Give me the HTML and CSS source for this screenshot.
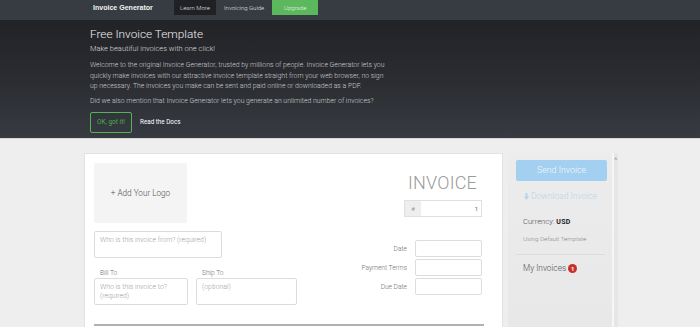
FILE: index.html
```html
<!DOCTYPE html>
<html lang="en">
<head>
    <meta charset="UTF-8">
    <meta name="viewport" content="width=device-width, initial-scale=1.0">
    <title>Invoice Generator</title>
    <link rel="stylesheet" href="styles.css">
</head>
<body>
    <nav class="topbar">
        <div class="container topbar-inner">
            <span class="brand">Invoice Generator</span>
            <a class="nav-link nav-dark" href="#">Learn More</a>
            <a class="nav-link" href="#">Invoicing Guide</a>
            <a class="nav-link nav-green" href="#">Upgrade</a>
        </div>
    </nav>

    <header class="hero">
        <div class="container hero-inner">
            <h1>Free Invoice Template</h1>
            <p class="lead">Make beautiful invoices with one click!</p>
            <p class="text">Welcome to the original Invoice Generator, trusted by millions of people. Invoice Generator lets you quickly make invoices with our attractive invoice template straight from your web browser, no sign up necessary. The invoices you make can be sent and paid online or downloaded as a PDF.</p>
            <p class="text">Did we also mention that Invoice Generator lets you generate an unlimited number of invoices?</p>
            <div class="hero-actions">
                <a class="btn-ok" href="#">OK, got it!</a>
                <a class="docs-link" href="#">Read the Docs</a>
            </div>
        </div>
    </header>

    <main class="container workspace">
        <section class="invoice-card">
            <div class="invoice-top">
                <div class="left-col">
                    <div class="logo-box">+ Add Your Logo</div>
                    <div class="field from-field">Who is this invoice from? (required)</div>
                    <div class="addr-row">
                        <div class="addr bill">
                            <div class="addr-label">Bill To</div>
                            <div class="field addr-field">Who is this invoice to? (required)</div>
                        </div>
                        <div class="addr ship">
                            <div class="addr-label">Ship To</div>
                            <div class="field addr-field">(optional)</div>
                        </div>
                    </div>
                </div>
                <div class="right-col">
                    <div class="invoice-title">INVOICE</div>
                    <div class="number-group">
                        <span class="number-addon">#</span>
                        <span class="number-value">1</span>
                    </div>
                    <div class="meta-rows">
                        <div class="meta-row"><span class="meta-label">Date</span><span class="meta-input"></span></div>
                        <div class="meta-row"><span class="meta-label">Payment Terms</span><span class="meta-input"></span></div>
                        <div class="meta-row"><span class="meta-label">Due Date</span><span class="meta-input"></span></div>
                    </div>
                </div>
            </div>
            <div class="items-header"></div>
        </section>

        <aside class="sidebar">
            <a class="btn-send" href="#">Send Invoice</a>
            <a class="download" href="#">
                <svg class="arrow" width="5" height="7" viewBox="0 0 5 7"><path d="M1.5 0h2v3.5h1.5L2.5 7 0 3.5h1.5z" fill="#b7d5ee"/></svg>Download Invoice
            </a>
            <div class="currency">Currency: <strong>USD</strong></div>
            <div class="template">Using Default Template</div>
            <div class="my-invoices">My Invoices <span class="badge">1</span></div>
        </aside>
        <div class="scrolltrack"><span class="caret">&#708;</span></div>
    </main>
</body>
</html>
```
FILE: styles.css
```css
* {
    margin: 0;
    padding: 0;
    box-sizing: border-box;
}

html, body {
    height: 327px;
    overflow: hidden;
}

body {
    font-family: Roboto, "Liberation Sans", sans-serif;
    background: #eeeeee;
}

a {
    text-decoration: none;
}

.container {
    width: 532px;
    margin: 0 auto;
}

/* Top bar */
.topbar {
    height: 20px;
    background: #373c43;
}

.topbar-inner {
    display: flex;
    align-items: flex-start;
    padding-left: 9px;
}

.brand {
    width: 81px;
    color: #f2f2f2;
    font-family: "Liberation Sans", sans-serif;
    font-weight: bold;
    font-size: 8px;
    line-height: 15px;
    white-space: nowrap;
    transform: scaleX(0.88);
    transform-origin: left center;
}

.nav-link {
    color: #e0e0e0;
    font-size: 6px;
    font-weight: 300;
    line-height: 15px;
    height: 15px;
}

.nav-dark {
    background: #1f2125;
    width: 42px;
    text-align: center;
    margin-right: 8px;
}

.nav-green {
    background: #5cb85c;
    color: #eaf6ea;
    width: 46px;
    text-align: center;
    margin-left: 8px;
}

/* Hero */
.hero {
    height: 119px;
    background: linear-gradient(to bottom, #222327 0%, #2a2c31 50%, #373b41 100%);
    border-bottom: 1px solid #d6d6d6;
}

.hero-inner {
    padding: 6px 0 0 6px;
    color: #dedede;
}

.hero h1 {
    font-size: 11.8px;
    font-weight: 300;
    line-height: 16px;
    color: #f0f0f0;
}

.lead {
    font-size: 7.5px;
    font-weight: 300;
    line-height: 12px;
    margin-top: 1px;
    color: #dcdcdc;
}

.text {
    font-size: 6.9px;
    font-weight: 300;
    line-height: 10.5px;
    max-width: 296px;
    margin-top: 5px;
    color: #cfcfcf;
}

.text + .text {
    max-width: none;
    margin-top: 4.5px;
}

.hero-actions {
    display: flex;
    align-items: center;
    margin-top: 5px;
}

.btn-ok {
    width: 42px;
    height: 21px;
    border: 1.5px solid #52b452;
    border-radius: 2px;
    color: #4cae4c;
    font-size: 6.5px;
    line-height: 18px;
    text-align: center;
    margin-right: 8px;
}

.docs-link {
    color: #ffffff;
    font-size: 6.3px;
}

/* Workspace */
.workspace {
    display: flex;
    align-items: flex-start;
    padding-top: 14px;
}

.invoice-card {
    width: 419px;
    height: 174px;
    background: #ffffff;
    border: 1px solid #e2e2e2;
    border-bottom: 0;
    padding: 9px 20px 0 9px;
}

.invoice-top {
    display: flex;
    justify-content: space-between;
    height: 160px;
}

.logo-box {
    width: 93px;
    height: 60px;
    background: #f4f4f4;
    border-radius: 2px;
    display: flex;
    align-items: center;
    justify-content: center;
    color: #505050;
    font-size: 8.2px;
    font-weight: 300;
}

.field {
    border: 1px solid #dcdcdc;
    border-radius: 2px;
    color: #a0a0a0;
    font-size: 6.9px;
    font-weight: 300;
    line-height: 9px;
    padding: 4px 5px;
}

.from-field {
    width: 128px;
    height: 27px;
    margin-top: 8px;
}

.addr-row {
    display: flex;
    gap: 8px;
    margin-top: 11px;
}

.addr-label {
    font-size: 6.6px;
    font-weight: 300;
    color: #707070;
    padding-left: 6px;
    line-height: 9px;
}

.addr-field {
    height: 27px;
}

.bill .addr-field {
    width: 94px;
}

.ship .addr-field {
    width: 101px;
}

.right-col {
    display: flex;
    flex-direction: column;
    align-items: flex-end;
    padding-top: 9px;
}

.invoice-title {
    font-size: 18px;
    font-weight: 300;
    color: #9a9a9a;
    line-height: 22px;
    margin-right: 5px;
    letter-spacing: 0.2px;
}

.number-group {
    display: flex;
    width: 78px;
    height: 17px;
    border: 1px solid #e0e0e0;
    margin-top: 6px;
    font-size: 6px;
    color: #666;
}

.number-addon {
    width: 16px;
    background: #eeeeee;
    color: #999;
    display: flex;
    align-items: center;
    justify-content: center;
}

.number-value {
    flex: 1;
    text-align: right;
    line-height: 15px;
    padding-right: 3px;
}

.meta-rows {
    margin-top: 23px;
    display: flex;
    flex-direction: column;
    gap: 2px;
}

.meta-row {
    display: flex;
    align-items: center;
    justify-content: flex-end;
}

.meta-label {
    font-size: 6.6px;
    font-weight: 300;
    color: #707070;
    margin-right: 8px;
}

.meta-input {
    width: 67px;
    height: 17px;
    border: 1px solid #dddddd;
    border-radius: 2px;
}

.items-header {
    height: 2px;
    width: 390px;
    background: #b0b0b0;
    margin-top: 1px;
}

/* Sidebar */
.sidebar {
    width: 106px;
    height: 174px;
    margin-left: 5px;
    background: linear-gradient(to bottom, #ececec, #e8e8e8);
    border-right: 2px solid #f6f6f6;
    padding: 7px 7px 0 8px;
    display: flex;
    flex-direction: column;
}

.btn-send {
    display: block;
    width: 91px;
    height: 21px;
    background: #a3cff0;
    border-radius: 2px;
    color: #f4f9fd;
    font-size: 8.8px;
    font-weight: 300;
    line-height: 21px;
    text-align: center;
}

.download {
    display: flex;
    align-items: center;
    color: #b7d5ee;
    font-size: 8.5px;
    font-weight: 300;
    line-height: 10px;
    margin-top: 10px;
    padding-left: 8px;
}

.arrow {
    margin-right: 2px;
}

.currency {
    font-size: 7.6px;
    font-weight: 300;
    color: #505050;
    margin-top: 16px;
    padding-left: 7px;
}

.currency strong {
    color: #222;
    font-size: 7px;
    font-weight: bold;
    letter-spacing: 0.3px;
}

.template {
    font-size: 6.2px;
    font-weight: 300;
    color: #888;
    margin-top: 9px;
    padding: 0 0 11px 7px;
    border-bottom: 1px solid #dcdcdc;
}

.my-invoices {
    font-size: 8.3px;
    font-weight: 300;
    color: #505050;
    margin-top: 8px;
    display: flex;
    align-items: center;
    gap: 2px;
    padding-left: 7px;
}

.badge {
    width: 9px;
    height: 9px;
    border-radius: 50%;
    background: #c8302b;
    color: #fff;
    font-size: 6px;
    font-weight: bold;
    line-height: 9px;
    text-align: center;
}

.scrolltrack {
    width: 7px;
    height: 174px;
    background: #e6e6e6;
    display: flex;
    justify-content: center;
}

.caret {
    font-size: 6px;
    color: #777;
    line-height: 8px;
    margin-top: 2px;
}
```
